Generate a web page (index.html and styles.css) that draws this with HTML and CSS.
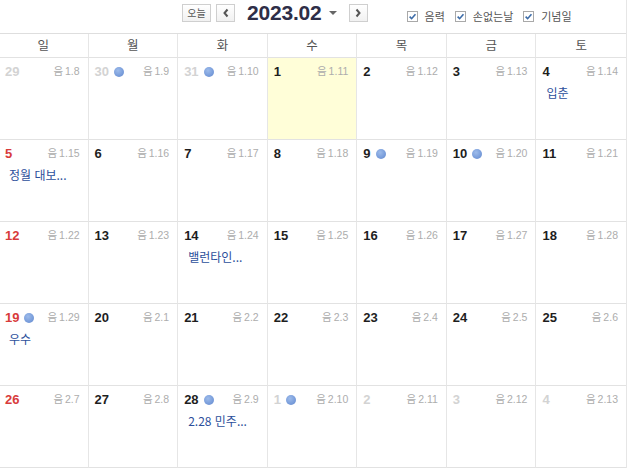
FILE: index.html
```html
<!DOCTYPE html>
<html lang="ko">
<head>
<meta charset="utf-8">
<title>2023.02</title>
<link rel="stylesheet" href="styles.css">
</head>
<body>
<div class="page">
  <div class="toolbar">
    <div class="nav">
      <button class="btn btn-today">오늘</button>
      <button class="btn btn-arrow" aria-label="이전"><svg width="8" height="10" viewBox="0 0 8 10"><path d="M5.5 1.5 L2.5 5 L5.5 8.5" fill="none" stroke="#555" stroke-width="2"/></svg></button>
      <span class="title">2023.02</span>
      <span class="caret"></span>
      <button class="btn btn-arrow" aria-label="다음"><svg width="8" height="10" viewBox="0 0 8 10"><path d="M2.5 1.5 L5.5 5 L2.5 8.5" fill="none" stroke="#555" stroke-width="2"/></svg></button>
    </div>
    <div class="opts">
      <label class="opt"><span class="cb"><svg width="10" height="10" viewBox="0 0 10 10"><path d="M1.8 5.2 L4 7.4 L8.3 2.4" fill="none" stroke="#3d6ca8" stroke-width="1.8"/></svg></span>음력</label>
      <label class="opt"><span class="cb"><svg width="10" height="10" viewBox="0 0 10 10"><path d="M1.8 5.2 L4 7.4 L8.3 2.4" fill="none" stroke="#3d6ca8" stroke-width="1.8"/></svg></span>손없는날</label>
      <label class="opt"><span class="cb"><svg width="10" height="10" viewBox="0 0 10 10"><path d="M1.8 5.2 L4 7.4 L8.3 2.4" fill="none" stroke="#3d6ca8" stroke-width="1.8"/></svg></span>기념일</label>
    </div>
  </div>

  <div class="cal">
    <div class="head">
      <div class="hd">일</div><div class="hd">월</div><div class="hd">화</div><div class="hd">수</div><div class="hd">목</div><div class="hd">금</div><div class="hd">토</div>
    </div>

    <div class="week">
      <div class="cell other"><div class="top"><span class="num">29</span><span class="lunar">음 1.8</span></div></div>
      <div class="cell other"><div class="top"><span class="num">30<i class="dot"></i></span><span class="lunar">음 1.9</span></div></div>
      <div class="cell other"><div class="top"><span class="num">31<i class="dot"></i></span><span class="lunar">음 1.10</span></div></div>
      <div class="cell today"><div class="top"><span class="num">1</span><span class="lunar">음 1.11</span></div></div>
      <div class="cell"><div class="top"><span class="num">2</span><span class="lunar">음 1.12</span></div></div>
      <div class="cell"><div class="top"><span class="num">3</span><span class="lunar">음 1.13</span></div></div>
      <div class="cell"><div class="top"><span class="num">4</span><span class="lunar">음 1.14</span></div><div class="event">입춘</div></div>
    </div>

    <div class="week">
      <div class="cell sun"><div class="top"><span class="num">5</span><span class="lunar">음 1.15</span></div><div class="event">정월 대보...</div></div>
      <div class="cell"><div class="top"><span class="num">6</span><span class="lunar">음 1.16</span></div></div>
      <div class="cell"><div class="top"><span class="num">7</span><span class="lunar">음 1.17</span></div></div>
      <div class="cell"><div class="top"><span class="num">8</span><span class="lunar">음 1.18</span></div></div>
      <div class="cell"><div class="top"><span class="num">9<i class="dot"></i></span><span class="lunar">음 1.19</span></div></div>
      <div class="cell"><div class="top"><span class="num">10<i class="dot"></i></span><span class="lunar">음 1.20</span></div></div>
      <div class="cell"><div class="top"><span class="num">11</span><span class="lunar">음 1.21</span></div></div>
    </div>

    <div class="week">
      <div class="cell sun"><div class="top"><span class="num">12</span><span class="lunar">음 1.22</span></div></div>
      <div class="cell"><div class="top"><span class="num">13</span><span class="lunar">음 1.23</span></div></div>
      <div class="cell"><div class="top"><span class="num">14</span><span class="lunar">음 1.24</span></div><div class="event">밸런타인...</div></div>
      <div class="cell"><div class="top"><span class="num">15</span><span class="lunar">음 1.25</span></div></div>
      <div class="cell"><div class="top"><span class="num">16</span><span class="lunar">음 1.26</span></div></div>
      <div class="cell"><div class="top"><span class="num">17</span><span class="lunar">음 1.27</span></div></div>
      <div class="cell"><div class="top"><span class="num">18</span><span class="lunar">음 1.28</span></div></div>
    </div>

    <div class="week">
      <div class="cell sun"><div class="top"><span class="num">19<i class="dot"></i></span><span class="lunar">음 1.29</span></div><div class="event">우수</div></div>
      <div class="cell"><div class="top"><span class="num">20</span><span class="lunar">음 2.1</span></div></div>
      <div class="cell"><div class="top"><span class="num">21</span><span class="lunar">음 2.2</span></div></div>
      <div class="cell"><div class="top"><span class="num">22</span><span class="lunar">음 2.3</span></div></div>
      <div class="cell"><div class="top"><span class="num">23</span><span class="lunar">음 2.4</span></div></div>
      <div class="cell"><div class="top"><span class="num">24</span><span class="lunar">음 2.5</span></div></div>
      <div class="cell"><div class="top"><span class="num">25</span><span class="lunar">음 2.6</span></div></div>
    </div>

    <div class="week">
      <div class="cell sun"><div class="top"><span class="num">26</span><span class="lunar">음 2.7</span></div></div>
      <div class="cell"><div class="top"><span class="num">27</span><span class="lunar">음 2.8</span></div></div>
      <div class="cell"><div class="top"><span class="num">28<i class="dot"></i></span><span class="lunar">음 2.9</span></div><div class="event">2.28 민주...</div></div>
      <div class="cell other"><div class="top"><span class="num">1<i class="dot"></i></span><span class="lunar">음 2.10</span></div></div>
      <div class="cell other"><div class="top"><span class="num">2</span><span class="lunar">음 2.11</span></div></div>
      <div class="cell other"><div class="top"><span class="num">3</span><span class="lunar">음 2.12</span></div></div>
      <div class="cell other"><div class="top"><span class="num">4</span><span class="lunar">음 2.13</span></div></div>
    </div>
  </div>
</div>
</body>
</html>
```

FILE: styles.css
```css
* { box-sizing: border-box; }

html, body {
  margin: 0;
  padding: 0;
  background: #fff;
}

body {
  font-family: "Liberation Sans", "Noto Sans CJK KR", sans-serif;
  color: #222;
  overflow: hidden;
}

.page {
  width: 628px;
  margin-left: -1px;
  border-right: 1px solid #e6e6e6;
}

/* toolbar */
.toolbar {
  height: 33px;
  display: flex;
  align-items: flex-start;
  padding-top: 4px;
}

.nav {
  display: flex;
  align-items: center;
  height: 18px;
  margin-left: 183px;
}

.btn {
  height: 18px;
  padding: 0;
  margin: 0;
  border: 1px solid #cfcfcf;
  background: linear-gradient(#ffffff, #f1f1f1);
  font-family: "Noto Sans CJK KR", sans-serif;
  font-size: 10px;
  color: #555;
  display: flex;
  align-items: center;
  justify-content: center;
  line-height: 1;
}

.btn-today {
  width: 29px;
}

.btn-arrow {
  width: 19px;
  margin-left: 5px;
}

.title {
  margin-left: 12px;
  font-family: "Liberation Sans", sans-serif;
  font-weight: bold;
  font-size: 21px;
  line-height: 18px;
  color: #2e2e47;
  letter-spacing: -0.2px;
}

.caret {
  width: 0;
  height: 0;
  margin-left: 7px;
  margin-right: 8px;
  border-left: 4px solid transparent;
  border-right: 4px solid transparent;
  border-top: 4px solid #666;
}

.nav .btn-arrow:last-child {
  margin-left: 4px;
}

.opts {
  display: flex;
  align-items: center;
  gap: 10px;
  margin-left: 39px;
  margin-top: 4px;
  height: 16px;
}

.opt {
  display: flex;
  align-items: center;
  font-family: "Noto Sans CJK KR", sans-serif;
  font-size: 11px;
  color: #555;
  line-height: 1;
}

.cb {
  width: 11px;
  height: 11px;
  border: 1px solid #a9a9a9;
  background: #fff;
  margin-right: 7px;
  display: flex;
  align-items: center;
  justify-content: center;
}

.cb svg {
  width: 9px;
  height: 9px;
}

/* calendar */
.cal {
  border-top: 1px solid #dedede;
}

.head,
.week {
  display: grid;
  grid-template-columns: repeat(7, 1fr);
}

.hd {
  height: 24px;
  border-bottom: 1px solid #e2e2e2;
  border-right: 1px solid #e6e6e6;
  text-align: center;
  font-family: "Noto Sans CJK KR", sans-serif;
  font-size: 12.5px;
  line-height: 22px;
  color: #555;
}

.hd:last-child,
.cell:last-child {
  border-right: none;
}

.cell {
  height: 82px;
  border-bottom: 1px solid #e2e2e2;
  border-right: 1px solid #e6e6e6;
  padding: 6px 8px 0 6px;
}

.cell.today {
  background: #fffed8;
}

.top {
  display: flex;
  justify-content: space-between;
  align-items: center;
  height: 15px;
}

.num {
  display: flex;
  align-items: center;
  font-family: "Liberation Sans", sans-serif;
  font-weight: bold;
  font-size: 13px;
  line-height: 15px;
  color: #1e1e1e;
}

.sun .num {
  color: #d83b3b;
}

.other .num {
  color: #d3d3d3;
}

.dot {
  display: inline-block;
  width: 10px;
  height: 10px;
  margin-left: 5px;
  border-radius: 50%;
  background: radial-gradient(circle at 40% 35%, #9dbbea 0%, #7b9fdc 55%, #6288cc 100%);
}

.lunar {
  font-family: "Liberation Sans", "Noto Sans CJK KR", sans-serif;
  font-size: 10.5px;
  line-height: 15px;
  color: #adadad;
  word-spacing: -1px;
}

.event {
  margin-top: 6px;
  margin-left: 4px;
  font-family: "Noto Sans CJK KR", sans-serif;
  font-size: 12px;
  line-height: 16px;
  color: #2c4f9b;
  white-space: nowrap;
}
```
